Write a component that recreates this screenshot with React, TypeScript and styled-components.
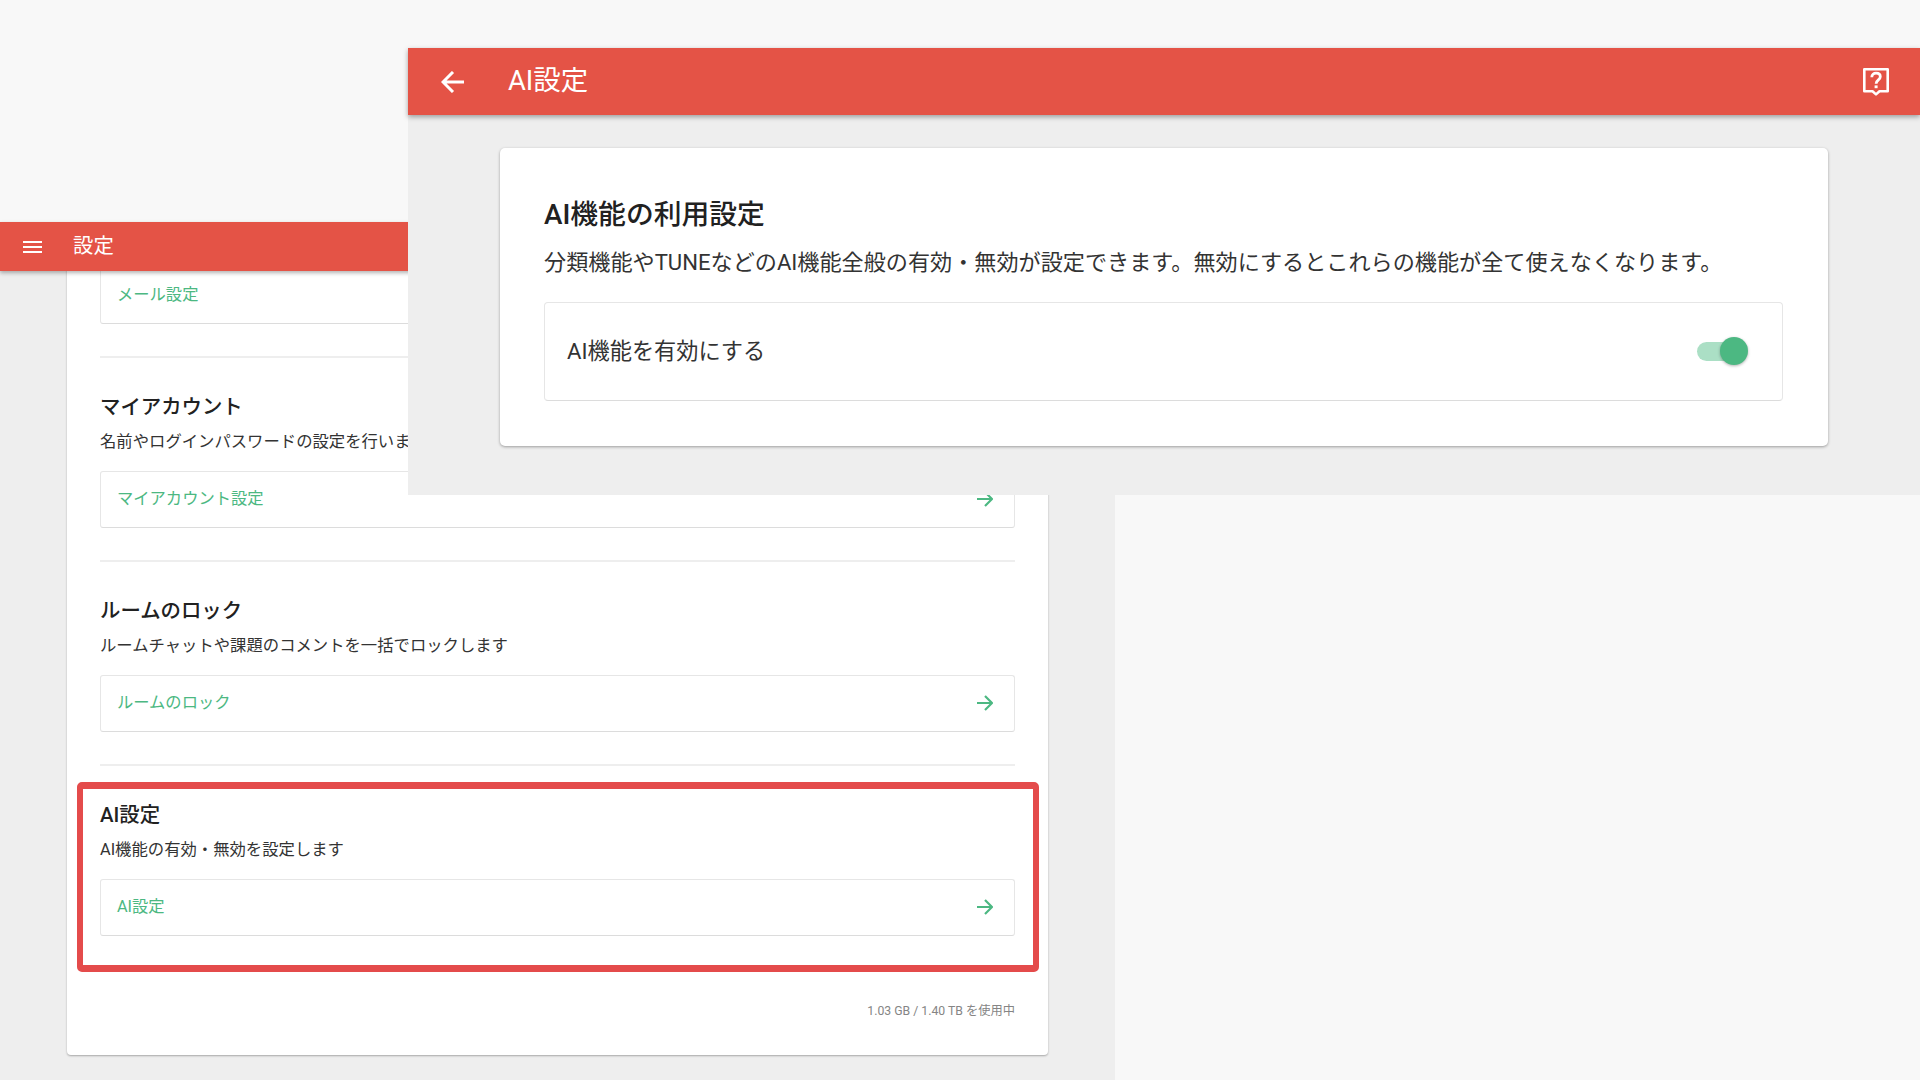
import React from 'react';
import styled, { createGlobalStyle } from 'styled-components';

const Global = createGlobalStyle`
  html, body { margin: 0; padding: 0; background: #f8f8f8; }
  body { font-family: Roboto, "Noto Sans CJK JP", sans-serif; color: #212121; }
  * { box-sizing: border-box; }
`;

const RED = '#e45346';
const GREEN = '#4cb882';

const Page = styled.div`
  position: relative;
  width: 1920px;
  height: 1080px;
  overflow: hidden;
  background: #f8f8f8;
`;

const BackScreen = styled.div`
  width: 1115px;
  height: 858px;
  margin-top: 222px;
  background: #eeeeee;
`;

const BackHeader = styled.header`
  position: relative;
  z-index: 2;
  display: flex;
  align-items: center;
  height: 49px;
  padding-left: 23px;
  background: ${RED};
  box-shadow: 0 2px 4px rgba(0, 0, 0, 0.3);
  color: #fff;
  font-size: 20.4px;
`;

const HeaderTitle = styled.span`
  margin: 0 0 1px 31px;
  line-height: 1;
`;

const SettingsCard = styled.main`
  width: 981px;
  height: 788px;
  margin: -4px 0 0 67px;
  padding: 0 33px;
  background: #fff;
  border-radius: 0 0 4px 4px;
  box-shadow: 0 1px 2px rgba(0, 0, 0, 0.3);
`;

const LinkBox = styled.a`
  display: flex;
  align-items: center;
  justify-content: space-between;
  height: 57px;
  padding: 0 21px 1px 16px;
  background: #fff;
  border: 1px solid #e6e6e6;
  border-bottom-color: #dcdcdc;
  border-radius: 3px;
  color: ${GREEN};
  font-size: 16.3px;
`;

const LinkLabel = styled.span`
  margin-bottom: 4px;
`;

const Section = styled.section`
  position: relative;
  margin-top: 32px;
  padding-top: 35px;
  border-top: 2px solid #eeeeee;
`;

const SectionTitle = styled.h2`
  margin: 0;
  font-size: 20.4px;
  font-weight: 500;
  line-height: 28px;
  color: #212121;
`;

const SectionText = styled.p`
  margin: 9px 0 17px;
  font-size: 16.35px;
  line-height: 24px;
  color: #333;
`;

const Highlight = styled.div`
  position: absolute;
  top: 16px;
  left: -23px;
  right: -24px;
  height: 190px;
  border: 7px solid #e44b4b;
  border-width: 7px 6px;
  border-radius: 5px;
  pointer-events: none;
`;

const Storage = styled.p`
  margin: 66px 0 0;
  font-size: 12.25px;
  line-height: 18px;
  text-align: right;
  color: #858585;
`;

const Overlay = styled.div`
  position: absolute;
  z-index: 3;
  top: 48px;
  left: 408px;
  width: 1512px;
  height: 447px;
  background: #eeeeee;
`;

const TopBar = styled.header`
  display: flex;
  align-items: center;
  height: 67px;
  padding: 0 31px 0 33px;
  background: ${RED};
  box-shadow: 0 2px 5px rgba(0, 0, 0, 0.35);
  color: #fff;
`;

const TopTitle = styled.h1`
  flex: 1;
  margin: 0 0 0 44px;
  font-size: 27.4px;
  font-weight: 400;
  line-height: 1;
`;

const FeatureCard = styled.div`
  width: 1328px;
  height: 298px;
  margin: 33px 0 0 92px;
  padding: 49px 45px 0 44px;
  background: #fff;
  border-radius: 5px;
  box-shadow: 0 1px 3px rgba(0, 0, 0, 0.35);
`;

const FeatureTitle = styled.h2`
  margin: 0;
  font-size: 27.8px;
  font-weight: 500;
  line-height: 36px;
  color: #212121;
`;

const FeatureText = styled.p`
  margin: 12px 0 0;
  font-size: 22.13px;
  line-height: 34px;
  white-space: nowrap;
  color: #333;
`;

const ToggleRow = styled.div`
  display: flex;
  align-items: center;
  justify-content: space-between;
  height: 99px;
  margin-top: 23px;
  padding: 0 34px 0 22px;
  border: 1px solid #e6e6e6;
  border-bottom-color: #dcdcdc;
  border-radius: 4px;
  font-size: 22.2px;
  color: #333;
`;

const RowLabel = styled.span`
  margin-bottom: 5px;
`;

const Switch = styled.div`
  position: relative;
  width: 51px;
  height: 19px;
`;

const SwitchTrack = styled.div`
  width: 43px;
  height: 19px;
  border-radius: 10px;
  background: #abdfc5;
`;

const SwitchThumb = styled.div`
  position: absolute;
  top: -5px;
  right: 0;
  width: 28px;
  height: 28px;
  border-radius: 50%;
  background: ${GREEN};
  box-shadow: 0 1px 3px rgba(0, 0, 0, 0.3);
`;

const Burger = () => (
  <svg width="19" height="12" viewBox="0 0 19 12" fill="none" stroke="#fff" strokeWidth="2">
    <path d="M0 1h19M0 6h19M0 11h19" />
  </svg>
);

const ArrowRight = () => (
  <svg width="16" height="16" viewBox="0 0 16 16" fill="none" stroke={GREEN} strokeWidth="2.2">
    <path d="M0 8h15M8 1l7 7-7 7" />
  </svg>
);

const ArrowLeft = () => (
  <svg width="23" height="22" viewBox="0 0 23 22" fill="none" stroke="#fff" strokeWidth="3">
    <path d="M23 11H2M12 1L2 11l10 10" />
  </svg>
);

const HelpIcon = () => (
  <svg width="26" height="28" viewBox="0 0 26 28" fill="none" stroke="#fff" strokeWidth="2.6">
    <path d="M1.300 1.300h23.400v22h-8.200L13 26.400l-3.500-3.100H1.300z" strokeLinejoin="round" />
    <path d="M8.800 9.200c0-2.600 1.900-4.100 4.300-4.100s4.200 1.400 4.200 3.700c0 3.100-4.200 3-4.200 6.900" strokeWidth="2.800" />
    <path d="M13.100 17.400v2.800" strokeWidth="3" />
  </svg>
);

const sections = [
  { title: 'マイアカウント', text: '名前やログインパスワードの設定を行います', link: 'マイアカウント設定' },
  { title: 'ルームのロック', text: 'ルームチャットや課題のコメントを一括でロックします', link: 'ルームのロック' },
  { title: 'AI設定', text: 'AI機能の有効・無効を設定します', link: 'AI設定', highlighted: true },
];

export default function App() {
  return (
    <Page>
      <Global />
      <BackScreen>
        <BackHeader>
          <Burger />
          <HeaderTitle>設定</HeaderTitle>
        </BackHeader>
        <SettingsCard>
          <LinkBox>
            <LinkLabel>メール設定</LinkLabel>
            <ArrowRight />
          </LinkBox>
          {sections.map((s) => (
            <Section key={s.title}>
              {s.highlighted && <Highlight />}
              <SectionTitle>{s.title}</SectionTitle>
              <SectionText>{s.text}</SectionText>
              <LinkBox>
                <LinkLabel>{s.link}</LinkLabel>
                <ArrowRight />
              </LinkBox>
            </Section>
          ))}
          <Storage>1.03 GB / 1.40 TB を使用中</Storage>
        </SettingsCard>
      </BackScreen>
      <Overlay>
        <TopBar>
          <ArrowLeft />
          <TopTitle>AI設定</TopTitle>
          <HelpIcon />
        </TopBar>
        <FeatureCard>
          <FeatureTitle>AI機能の利用設定</FeatureTitle>
          <FeatureText>分類機能やTUNEなどのAI機能全般の有効・無効が設定できます。無効にするとこれらの機能が全て使えなくなります。</FeatureText>
          <ToggleRow>
            <RowLabel>AI機能を有効にする</RowLabel>
            <Switch>
              <SwitchTrack />
              <SwitchThumb />
            </Switch>
          </ToggleRow>
        </FeatureCard>
      </Overlay>
    </Page>
  );
}
